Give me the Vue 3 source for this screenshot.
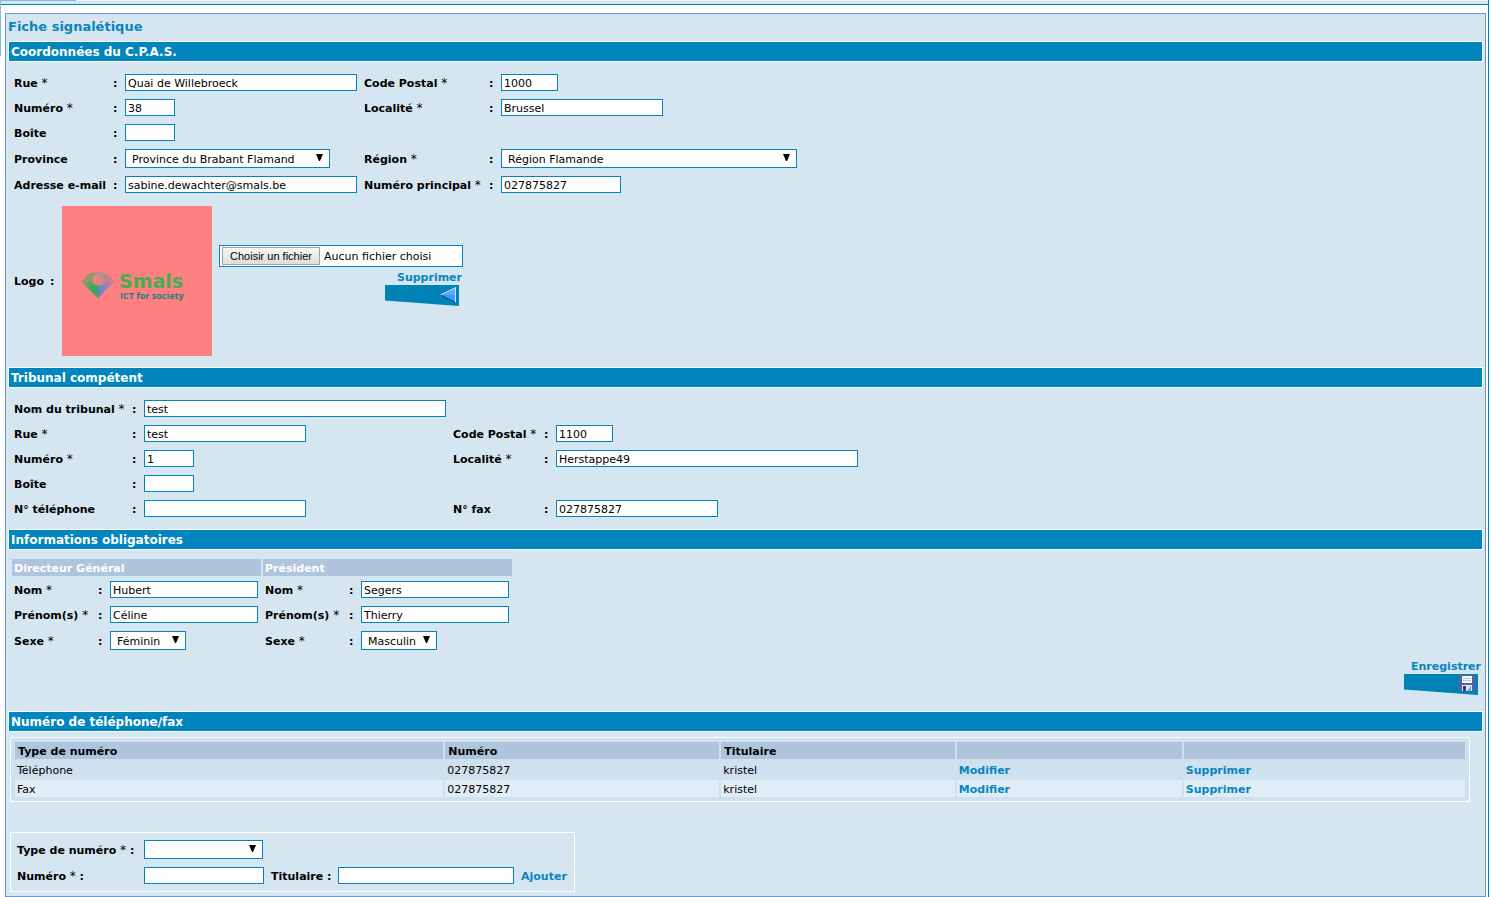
<script setup>
import { ref } from 'vue'

const fileInput = ref(null)
const fileName = ref('Aucun fichier choisi')

const cpas = ref([
  { id: 'rue', label: 'Rue', req: true, value: 'Quai de Willebroeck', size: 'w232' },
  { id: 'cp', label: 'Code Postal', req: true, value: '1000', size: 'w57' },
  { id: 'num', label: 'Numéro', req: true, value: '38', size: 'w50' },
  { id: 'loc', label: 'Localité', req: true, value: 'Brussel', size: 'w162' },
  { id: 'boite', label: 'Boîte', value: '', size: 'w50' },
  { id: 'vide' },
  { id: 'prov', label: 'Province', value: 'Province du Brabant Flamand', size: 'w205', select: true },
  { id: 'reg', label: 'Région', req: true, value: 'Région Flamande', size: 'w296', select: true },
  { id: 'mail', label: 'Adresse e-mail', value: 'sabine.dewachter@smals.be', size: 'w232' },
  { id: 'tel', label: 'Numéro principal', req: true, value: '027875827', size: 'w120' },
])

const tribunal = ref([
  { id: 't-nom', label: 'Nom du tribunal', req: true, value: 'test', size: 'w302' },
  { id: 't-vide1' },
  { id: 't-rue', label: 'Rue', req: true, value: 'test', size: 'w162' },
  { id: 't-cp', label: 'Code Postal', req: true, value: '1100', size: 'w57' },
  { id: 't-num', label: 'Numéro', req: true, value: '1', size: 'w50' },
  { id: 't-loc', label: 'Localité', req: true, value: 'Herstappe49', size: 'w302' },
  { id: 't-boite', label: 'Boîte', value: '', size: 'w50' },
  { id: 't-vide2' },
  { id: 't-tel', label: 'N° téléphone', value: '', size: 'w162' },
  { id: 't-fax', label: 'N° fax', value: '027875827', size: 'w162' },
])

const personnes = ref([
  {
    titre: 'Directeur Général',
    champs: [
      { id: 'd-nom', label: 'Nom', req: true, value: 'Hubert', size: 'w148' },
      { id: 'd-prenom', label: 'Prénom(s)', req: true, value: 'Céline', size: 'w148' },
      { id: 'd-sexe', label: 'Sexe', req: true, value: 'Féminin', size: 'w76', select: true, options: ['Féminin', 'Masculin'] },
    ],
  },
  {
    titre: 'Président',
    champs: [
      { id: 'p-nom', label: 'Nom', req: true, value: 'Segers', size: 'w148' },
      { id: 'p-prenom', label: 'Prénom(s)', req: true, value: 'Thierry', size: 'w148' },
      { id: 'p-sexe', label: 'Sexe', req: true, value: 'Masculin', size: 'w76', select: true, options: ['Féminin', 'Masculin'] },
    ],
  },
])

const numeros = [
  { type: 'Téléphone', numero: '027875827', titulaire: 'kristel' },
  { type: 'Fax', numero: '027875827', titulaire: 'kristel' },
]

function onFile(e) {
  fileName.value = e.target.files[0]?.name ?? 'Aucun fichier choisi'
}
</script>

<template>
  <div class="page">
    <div class="strip"><div class="tab"></div></div>
    <div class="edge"></div>
    <main class="panel">
      <h1>Fiche signalétique</h1>

      <h2>Coordonnées du C.P.A.S.</h2>
      <form class="fields cpas" @submit.prevent>
        <template v-for="f in cpas" :key="f.id">
          <span v-if="!f.label" class="blank"></span>
          <template v-else>
            <label :for="f.id"><b>{{ f.label }}</b><span v-if="f.req" class="req"> *</span></label>
            <b>:</b>
            <span v-if="f.select" class="pick" :class="f.size">
              <select :id="f.id" v-model="f.value"><option>{{ f.value }}</option></select>
              <svg viewBox="0 0 7 7"><path d="M0 0h7L4 7H3z" /></svg>
            </span>
            <input v-else :id="f.id" v-model="f.value" type="text" :class="f.size" />
          </template>
        </template>
      </form>

      <div class="logo-row">
        <b class="logo-label">Logo</b>
        <b class="logo-colon">:</b>
        <svg class="logo" viewBox="0 0 150 150" role="img" aria-label="Smals ICT for society">
          <defs>
            <linearGradient id="wing" x1="0" x2="1">
              <stop offset="0" stop-color="#c98672" />
              <stop offset=".3" stop-color="#7fa068" />
              <stop offset=".6" stop-color="#a98a94" />
              <stop offset="1" stop-color="#e07c8a" />
            </linearGradient>
            <linearGradient id="tip" x1="0" x2="1">
              <stop offset="0" stop-color="#8fa068" />
              <stop offset=".35" stop-color="#35a94c" />
              <stop offset=".5" stop-color="#41a078" />
              <stop offset=".55" stop-color="#6b86c8" />
              <stop offset="1" stop-color="#c982a0" />
            </linearGradient>
            <linearGradient id="eye" x1="0" y1="1" x2="1" y2="0">
              <stop offset="0" stop-color="#ff8080" />
              <stop offset=".6" stop-color="#d98588" />
              <stop offset="1" stop-color="#8a9a8a" />
            </linearGradient>
          </defs>
          <rect width="150" height="150" fill="#ff8080" />
          <path d="M19 76L26 68Q36 64 45 68L53 75L36 92z" fill="url(#wing)" />
          <path d="M20 77L28 76Q36 84 45 76L52 76L36 92z" fill="url(#tip)" />
          <circle cx="36.500" cy="73" r="6" fill="url(#eye)" />
          <text x="57" y="82" class="brand">Smals</text>
          <text x="58" y="93" class="motto">ICT for society</text>
        </svg>
        <div class="upload">
          <div class="file">
            <button type="button" @click="fileInput.click()">Choisir un fichier</button>
            <label for="logo-file">{{ fileName }}</label>
            <input id="logo-file" ref="fileInput" type="file" hidden @change="onFile" />
          </div>
          <a href="#" class="action">
            Supprimer
            <svg class="flag" viewBox="0 0 74 21">
              <path d="M0 0h74v21L0 15.500z" fill="#0083b7" />
              <path d="M55.500 10L70.500 2.500V17.500z" fill="#3f97f5" stroke="#0a3f86" />
              <path d="M57 9.700L70 3.200V10z" fill="#5aa9fa" />
              <path d="M55.500 10L70.500 2.500V17.500" fill="none" stroke="#d6ebff" />
            </svg>
          </a>
        </div>
      </div>

      <h2>Tribunal compétent</h2>
      <form class="fields tribunal" @submit.prevent>
        <template v-for="f in tribunal" :key="f.id">
          <span v-if="!f.label" class="blank"></span>
          <template v-else>
            <label :for="f.id"><b>{{ f.label }}</b><span v-if="f.req" class="req"> *</span></label>
            <b>:</b>
            <input :id="f.id" v-model="f.value" type="text" :class="f.size" />
          </template>
        </template>
      </form>

      <h2>Informations obligatoires</h2>
      <div class="people">
        <section v-for="p in personnes" :key="p.titre">
          <h3>{{ p.titre }}</h3>
          <div class="fields person">
            <template v-for="f in p.champs" :key="f.id">
              <label :for="f.id"><b>{{ f.label }}</b><span class="req"> *</span></label>
              <b>:</b>
              <span v-if="f.select" class="pick" :class="f.size">
                <select :id="f.id" v-model="f.value"><option v-for="o in f.options" :key="o">{{ o }}</option></select>
                <svg viewBox="0 0 7 7"><path d="M0 0h7L4 7H3z" /></svg>
              </span>
              <input v-else :id="f.id" v-model="f.value" type="text" :class="f.size" />
            </template>
          </div>
        </section>
      </div>
      <div class="save">
        <a href="#" class="action">
          Enregistrer
          <svg class="flag" viewBox="0 0 74 21">
            <path d="M0 0h74v21L0 15.500z" fill="#0083b7" />
            <path d="M55 1h16v16H57l-2-2z" fill="#56639a" />
            <path d="M58 2h10v7H58z" fill="#f4f5fa" />
            <path d="M59 4.500h8M59 6.500h8" stroke="#c3c6d6" />
            <path d="M58 11h10v6H58z" fill="#e3e5f2" />
            <path d="M59 12h3v5h-3z" fill="#343c78" />
            <path d="M63 17l4-5v5z" fill="#8d94c0" />
          </svg>
        </a>
      </div>

      <h2>Numéro de téléphone/fax</h2>
      <table>
        <colgroup><col class="c1" /><col class="c2" /><col class="c3" /><col class="c4" /><col /></colgroup>
        <thead>
          <tr><th>Type de numéro</th><th>Numéro</th><th>Titulaire</th><th></th><th></th></tr>
        </thead>
        <tbody>
          <tr v-for="n in numeros" :key="n.type">
            <td>{{ n.type }}</td>
            <td>{{ n.numero }}</td>
            <td>{{ n.titulaire }}</td>
            <td><a href="#">Modifier</a></td>
            <td><a href="#">Supprimer</a></td>
          </tr>
        </tbody>
      </table>

      <form class="add" @submit.prevent>
        <label for="a-type"><b>Type de numéro</b><span class="req"> * </span><b>:</b></label>
        <span class="pick w119">
          <select id="a-type"><option></option></select>
          <svg viewBox="0 0 7 7"><path d="M0 0h7L4 7H3z" /></svg>
        </span>
        <label for="a-num" class="start"><b>Numéro</b><span class="req"> * </span><b>:</b></label>
        <input id="a-num" type="text" class="w120" />
        <label for="a-tit"><b>Titulaire :</b></label>
        <input id="a-tit" type="text" class="w176" />
        <a href="#">Ajouter</a>
      </form>
    </main>
  </div>
</template>

<style>
body {
  background: #fff;
}
</style>

<style scoped>
.page {
  position: relative;
  margin-right: 3px;
  border-right: 1px solid #0083bd;
  font: 11px/15px Verdana, "DejaVu Sans", sans-serif;
  color: #000;
}
.page * {
  box-sizing: border-box;
}
.strip {
  height: 5px;
  margin-left: 1px;
  border-bottom: 1px solid #0083bd;
  background: #d5e6f1;
  box-shadow: inset 0 1px #e9f1f7;
}
.tab {
  width: 75px;
  height: 1px;
  background: #7fbfdd;
}
.edge {
  position: absolute;
  top: 0;
  left: 0;
  width: 1px;
  height: 56px;
  background: #7fbfdd;
}
.panel {
  margin: 8px 2px 0 5px;
  padding: 0 2px 4px;
  border: 1px solid #6699cc;
  background: #d5e6f1;
}
h1, h2, h3 {
  margin: 0;
  font-weight: bold;
}
h1 {
  height: 27px;
  font-size: 13px;
  line-height: 25px;
  color: #0985bd;
}
h2 {
  height: 21px;
  padding: 1px 0 0 2px;
  border: 1px solid #fff;
  background: #0085be;
  color: #fff;
  font-size: 12px;
  line-height: 19px;
}
a {
  color: #0985bd;
  font-weight: bold;
  text-decoration: none;
}
label {
  white-space: pre;
}
.req {
  font-size: 12px;
}
.fields {
  display: grid;
  align-items: center;
  row-gap: 8px;
  padding: 12px 6px;
}
.fields > label, .fields > b, .add > label, .add > a {
  height: 17px;
  padding-top: 2px;
}
.cpas {
  grid-template-columns: 99px 12px 239px 125px 12px 1fr;
  padding-bottom: 13px;
}
.tribunal {
  grid-template-columns: 118px 12px 309px 91px 12px 1fr;
}
.blank {
  grid-column: span 3;
}
input, select {
  height: 17px;
  margin: 0;
  padding: 2px 2px 0;
  border: 1px solid #0085be;
  border-radius: 0;
  background: #fff;
  color: #000;
  font: inherit;
  line-height: 13px;
}
.pick {
  position: relative;
  display: block;
  height: 19px;
}
.pick select {
  width: 100%;
  height: 19px;
  padding: 2px 18px 0 6px;
  appearance: none;
}
.pick svg {
  position: absolute;
  top: 5px;
  right: 7px;
  width: 7px;
  height: 7px;
  pointer-events: none;
}
.w50 { width: 50px; }
.w57 { width: 57px; }
.w76 { width: 76px; }
.w119 { width: 119px; }
.w120 { width: 120px; }
.w148 { width: 148px; }
.w162 { width: 162px; }
.w176 { width: 176px; }
.w205 { width: 205px; }
.w232 { width: 232px; }
.w296 { width: 296px; }
.w302 { width: 302px; }

.logo-row {
  display: flex;
  align-items: center;
  padding: 0 6px 11px;
}
.logo-label {
  width: 36px;
}
.logo-colon {
  width: 12px;
}
.logo {
  width: 150px;
  height: 150px;
}
.brand {
  font: bold 19px "DejaVu Sans", sans-serif;
  fill: #45ad52;
}
.motto {
  font: bold 9px "Open Sans", sans-serif;
  fill: #1b7f80;
}
.upload {
  width: 244px;
  margin: 0 0 12px 7px;
}
.file {
  display: flex;
  align-items: center;
  gap: 4px;
  height: 22px;
  margin-bottom: 1px;
  padding: 0 2px;
  border: 1px solid #0085be;
  background: #fff;
}
.file label {
  padding-top: 1px;
}
.file button {
  height: 18px;
  width: 98px;
  padding: 0;
  border: 1px solid #a0a0a0;
  border-radius: 0;
  background: linear-gradient(#f8f8f8, #dddddd);
  color: #000;
  font: 11px/16px "Liberation Sans", Arial, sans-serif;
  white-space: nowrap;
}
.action {
  display: block;
  padding: 2px 1px 0 0;
  text-align: right;
}
.flag {
  display: block;
  width: 74px;
  height: 21px;
  margin: 0 3px 0 auto;
}
.people {
  display: flex;
  gap: 2px;
  padding: 9px 4px 0;
}
.people section {
  width: 249px;
}
h3 {
  padding: 2px 0 0 2px;
  background: #b0c4de;
  color: #fff;
  font-size: 11px;
}
.person {
  grid-template-columns: 84px 12px 1fr;
  padding: 5px 0 0 2px;
}
.save {
  display: flex;
  justify-content: flex-end;
  padding: 7px 1px 16px;
}
table {
  width: calc(100% - 15px);
  margin: 5px 0 0 2px;
  padding: 2px;
  border: 1px solid #fff;
  border-spacing: 2px;
  background: #cfe0ee;
  table-layout: fixed;
}
th, td {
  height: 17px;
  padding: 2px 2px 0;
  text-align: left;
}
th {
  padding-left: 3px;
  background: #b0c4de;
}
tbody tr:nth-child(2) td {
  background: #e0edf5;
}
.c1 { width: 29.7%; }
.c2 { width: 19%; }
.c3 { width: 16.2%; }
.c4 { width: 15.6%; }
.add {
  display: grid;
  grid-template-columns: 127px 127px 67px 183px auto;
  row-gap: 8px;
  align-items: center;
  width: 565px;
  margin: 30px 0 0 2px;
  padding: 7px 6px;
  border: 1px solid #fff;
}
.start {
  grid-column: 1;
}
</style>
